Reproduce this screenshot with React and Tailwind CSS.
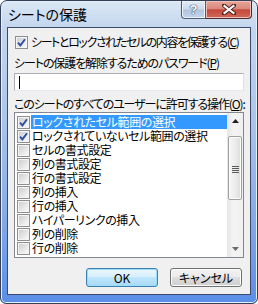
import React from "react";

const font = "font-['Noto_Sans_CJK_JP',sans-serif] [font-feature-settings:'palt']";

function Check({ checked }) {
  return (
    <span className="box-border w-[13px] h-[13px] border border-[#8e8f8f] bg-[#f4f4f4] p-[1px] flex shrink-0">
      <span className="flex-1 bg-gradient-to-br from-[#cfcfcf] to-[#f8f8f8] flex items-center justify-center">
        {checked && (
          <svg width="9" height="9" viewBox="0 0 9 9">
            <path d="M1 4.6 L3.4 7.4 L8 1.2" fill="none" stroke="#2c4f9f" strokeWidth="1.9" />
          </svg>
        )}
      </span>
    </span>
  );
}

const items = [
  ["ロックされたセル範囲の選択", true, true],
  ["ロックされていないセル範囲の選択", true, false],
  ["セルの書式設定", false, false],
  ["列の書式設定", false, false],
  ["行の書式設定", false, false],
  ["列の挿入", false, false],
  ["行の挿入", false, false],
  ["ハイパーリンクの挿入", false, false],
  ["列の削除", false, false],
  ["行の削除", false, false],
];

function Btn({ children, def }) {
  return (
    <div
      className={
        "box-border w-[72px] h-[19px] rounded-[3px] border flex items-center justify-center text-[12px] leading-[14px] " +
        (def
          ? "border-[#3c7fb1] bg-[linear-gradient(#eaf6fd_0%,#d9f0fc_45%,#bee6fd_50%,#a7d9f5_100%)] shadow-[inset_0_0_0_1px_#9ddcf5]"
          : "border-[#707070] bg-[linear-gradient(#f2f2f2_0%,#ebebeb_45%,#dddddd_50%,#cfcfcf_100%)] shadow-[inset_0_0_0_1px_#fcfcfc]")
      }
    >
      {children}
    </div>
  );
}

export default function App() {
  return (
    <div className={"w-[258px] h-[304px] overflow-hidden " + font}>
      <div className="box-border w-[258px] h-[304px] rounded-t-[7px] rounded-b-[6px] border border-[#34405a] bg-[linear-gradient(#dbe7f5_0%,#c3d6ee_9%,#aac5ea_40%,#80a7e7_75%,#5a8ee7_100%)] flex flex-col shadow-[inset_0_0_0_1px_#e6effa]">
        {/* title bar */}
        <div className="h-[26px] flex items-start shrink-0">
          <div className="pl-[7px] pt-[4px] text-[14px] leading-[18px] text-black whitespace-nowrap">シートの保護</div>
          <div className="ml-auto mr-[5px] flex">
            <div className="box-border w-[25px] h-[18px] border border-[#4a5a78] border-t-0 rounded-bl-[4px] bg-[linear-gradient(#e3ebf5_0%,#ccdaeb_48%,#b1c4de_52%,#c4d6ee_100%)] flex items-center justify-center shadow-[inset_0_0_0_1px_#eef3fa]">
              <span className="text-white font-bold text-[13px] leading-[13px] font-['Liberation_Sans',sans-serif] [text-shadow:0_0_1px_#344560,0_0_1px_#344560,0_0_1px_#344560]">?</span>
            </div>
            <div className="box-border w-[46px] h-[18px] border border-[#4a2a2a] border-t-0 border-l-0 rounded-br-[4px] bg-[linear-gradient(#e7a597_0%,#d88a7d_45%,#c5483b_52%,#d06a5a_100%)] flex items-center justify-center shadow-[inset_0_0_0_1px_#eebfb6]">
              <svg width="14" height="11" viewBox="0 0 14 11">
                <path d="M2 1.5 L12 9.5 M12 1.5 L2 9.5" stroke="#4b1e1a" strokeWidth="4" strokeLinecap="square" />
                <path d="M2.5 2 L11.5 9 M11.5 2 L2.5 9" stroke="#ffffff" strokeWidth="2.2" strokeLinecap="square" />
              </svg>
            </div>
          </div>
        </div>

        {/* client panel */}
        <div className="box-border mx-[6px] h-[268px] border border-[#3b4a6e] bg-[#f0f0f0] flex flex-col text-[12px] leading-[14px] text-black">
          <div className="mt-[7px] ml-[7px] flex items-center h-[14px]">
            <Check checked />
            <span className="ml-[3px] whitespace-nowrap tracking-[-1.4px]">
              シートとロックされたセルの内容を保護する(<span className="underline">C</span>)
            </span>
          </div>
          <div className="mt-[7px] ml-[6px] h-[14px] whitespace-nowrap tracking-[-1.1px]">
            シートの保護を解除するためのパスワード(<span className="underline">P</span>)
          </div>
          <div className="mt-[3px] mx-[6px] box-border h-[18px] border border-[#abadb3] border-b-[#e3e9ef] border-r-[#dbdfe6] bg-white flex items-center pl-[4px]">
            <span className="w-[1px] h-[13px] bg-black" />
          </div>
          <div className="mt-[6px] ml-[6px] h-[14px] whitespace-nowrap tracking-[-1.1px]">
            このシートのすべてのユーザーに許可する操作(<span className="underline">O</span>):
          </div>
          <div className="mt-[1px] mx-[6px] box-border h-[146px] border border-[#828790] bg-white flex">
            <div className="flex-1 pt-[2px] pl-[2px] flex flex-col">
              {items.map(([t, c, sel]) => (
                <div key={t} className="flex items-center h-[14px]">
                  <Check checked={c} />
                  <span
                    className={
                      "ml-[1px] h-[14px] flex-1 pl-[1px] whitespace-nowrap tracking-[-0.4px] " +
                      (sel ? "bg-[#3399ff] text-white" : "")
                    }
                  >
                    {t}
                  </span>
                </div>
              ))}
            </div>
            {/* scrollbar */}
            <div className="w-[16px] flex flex-col bg-[linear-gradient(90deg,#e6e6e6,#f3f3f3_40%,#f0f0f0)]">
              <div className="h-[16px] flex items-center justify-center">
                <svg width="7" height="4" viewBox="0 0 7 4"><path d="M0 4 L3.5 0 L7 4 Z" fill="#1e1e1e" /></svg>
              </div>
              <div className="flex-1 flex flex-col px-[1px]">
                <div className="mt-[7px] h-[64px] box-border rounded-[2px] border border-[#a0a0a0] bg-[linear-gradient(90deg,#f6f6f6,#ececec_50%,#dcdcdc)] shadow-[inset_0_0_0_1px_#fbfbfb] flex flex-col items-center justify-center gap-[1px] pt-[2px]">
                  <span className="w-[7px] h-[1px] bg-[#5a5a5a]" />
                  <span className="w-[7px] h-[1px] bg-[#5a5a5a]" />
                  <span className="w-[7px] h-[1px] bg-[#5a5a5a]" />
                  <span className="w-[7px] h-[1px] bg-[#5a5a5a]" />
                </div>
              </div>
              <div className="h-[16px] flex items-center justify-center">
                <svg width="7" height="4" viewBox="0 0 7 4"><path d="M0 0 L7 0 L3.5 4 Z" fill="#6a6a6a" /></svg>
              </div>
            </div>
          </div>
          <div className="mt-[10px] mr-[8px] flex justify-end gap-[12px]">
            <Btn def>OK</Btn>
            <Btn>キャンセル</Btn>
          </div>
        </div>
      </div>
    </div>
  );
}
